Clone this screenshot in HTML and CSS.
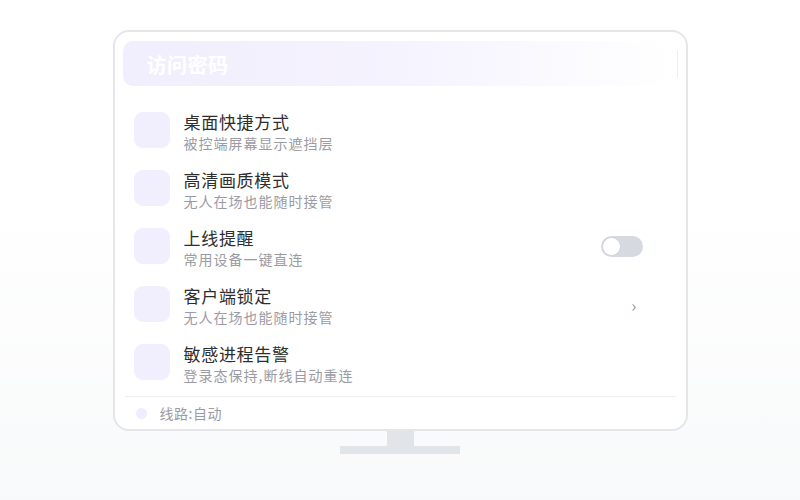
FILE: index.html
```html
<!DOCTYPE html>
<html lang="zh">
<head>
<meta charset="utf-8">
<link rel="stylesheet" href="styles.css">
</head>
<body>
<div class="stage">
  <div class="monitor">
    <div class="header">
      <span class="header-title">访问密码</span>
      <span class="header-line"></span>
    </div>
    <ul class="list">
      <li class="row">
        <span class="icon"></span>
        <div class="texts"><div class="title">桌面快捷方式</div><div class="sub">被控端屏幕显示遮挡层</div></div>
      </li>
      <li class="row">
        <span class="icon"></span>
        <div class="texts"><div class="title">高清画质模式</div><div class="sub">无人在场也能随时接管</div></div>
      </li>
      <li class="row">
        <span class="icon"></span>
        <div class="texts"><div class="title">上线提醒</div><div class="sub">常用设备一键直连</div></div>
        <span class="toggle"><span class="knob"></span></span>
      </li>
      <li class="row">
        <span class="icon"></span>
        <div class="texts"><div class="title">客户端锁定</div><div class="sub">无人在场也能随时接管</div></div>
        <span class="chevron">›</span>
      </li>
      <li class="row">
        <span class="icon"></span>
        <div class="texts"><div class="title">敏感进程告警</div><div class="sub">登录态保持,断线自动重连</div></div>
      </li>
    </ul>
    <div class="footer">
      <span class="dot"></span>
      <span class="footer-text">线路:自动</span>
    </div>
  </div>
  <div class="neck"></div>
  <div class="base"></div>
</div>
</body>
</html>
```

FILE: styles.css
```css
html, body {
  margin: 0;
  padding: 0;
}
body {
  width: 800px;
  height: 500px;
  background: linear-gradient(to bottom, #ffffff 0%, #ffffff 40%, #f8f9fa 100%);
  font-family: "Noto Sans CJK SC", "Noto Sans", sans-serif;
  overflow: hidden;
}
.stage {
  display: flex;
  flex-direction: column;
  align-items: center;
  padding-top: 30px;
}
.monitor {
  box-sizing: border-box;
  width: 575px;
  height: 401px;
  border: 2px solid #e4e6ea;
  border-radius: 16px;
  background: #ffffff;
  padding: 9px 8px 0 8px;
  display: flex;
  flex-direction: column;
}
.header {
  height: 45px;
  border-radius: 10px;
  background: linear-gradient(to right, #f1eefd 0%, #f5f3fe 50%, #ffffff 100%);
  display: flex;
  align-items: center;
  justify-content: space-between;
  padding: 1px 0 0 24px;
  box-sizing: border-box;
}
.header-title {
  color: #ffffff;
  font-size: 20px;
  font-weight: 700;
  letter-spacing: 0.5px;
}
.header-line {
  width: 1px;
  height: 28px;
  background: #eeeff3;
}
.list {
  list-style: none;
  margin: 15px 0 0 0;
  padding: 0 0 0 11px;
}
.row {
  height: 58px;
  display: flex;
  align-items: center;
}
.icon {
  width: 36px;
  height: 36px;
  border-radius: 9px;
  background: #f1eefd;
  flex: none;
}
.texts {
  margin-left: 14px;
  padding-top: 3px;
  flex: 1;
  display: flex;
  flex-direction: column;
}
.title {
  font-size: 17px;
  color: #2e2e30;
  line-height: 22px;
  letter-spacing: 0.7px;
}
.sub {
  font-size: 14px;
  color: #9b9ba3;
  line-height: 20px;
  letter-spacing: 1px;
}
.toggle {
  width: 42px;
  height: 21px;
  border-radius: 11px;
  background: #d6d9df;
  display: flex;
  align-items: center;
  padding-left: 1px;
  box-sizing: border-box;
  margin-right: 35px;
}
.knob {
  width: 19px;
  height: 19px;
  border-radius: 50%;
  background: #ffffff;
  box-sizing: border-box;
  border: 1px solid #d0d3d9;
}
.chevron {
  color: #8f939b;
  font-size: 17px;
  margin-right: 41px;
  line-height: 1;
}
.footer {
  margin-top: 5px;
  border-top: 1px solid #eeeff2;
  margin-left: 2px;
  margin-right: 2px;
  flex: 1;
  display: flex;
  align-items: center;
  padding-left: 11px;
}
.dot {
  width: 11px;
  height: 11px;
  border-radius: 50%;
  background: #efecfd;
}
.footer-text {
  margin-left: 13px;
  font-size: 14px;
  color: #9b9ba3;
  letter-spacing: 0.5px;
}
.neck {
  width: 27px;
  height: 15px;
  background: #e1e4e8;
}
.base {
  width: 120px;
  height: 8px;
  background: #e1e4e8;
}
```
